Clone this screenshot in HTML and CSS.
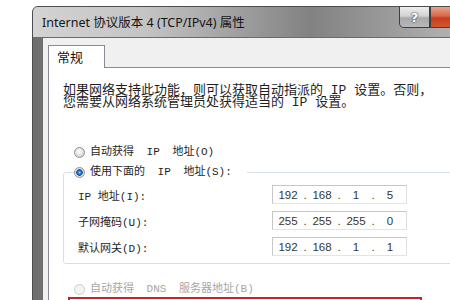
FILE: index.html
```html
<!DOCTYPE html>
<html>
<head>
    <meta charset="utf-8">
    <title>Internet 协议版本 4 (TCP/IPv4) 属性</title>
    <link rel="stylesheet" href="styles.css">
</head>
<body>
    <div class="window">
        <div class="titlebar">
            <span class="title">Internet 协议版本 4 (TCP/IPv4) 属性</span>
            <div class="caption-buttons">
                <button class="btn-help">?</button>
                <button class="btn-close"></button>
            </div>
        </div>
        <div class="frame">
            <div class="client">
                <div class="tabs">
                    <div class="tab">常规</div>
                </div>
                <div class="panel">
                    <p class="desc">如果网络支持此功能，则可以获取自动指派的 IP 设置。否则，<br>您需要从网络系统管理员处获得适当的 IP 设置。</p>

                    <label class="radio-row"><input type="radio" name="ip">自动获得 IP 地址(O)</label>

                    <fieldset class="group">
                        <legend><label class="radio-row"><input type="radio" name="ip" checked>使用下面的 IP 地址(S):</label></legend>
                        <div class="field-grid">
                            <span class="field-label">IP 地址(I):</span>
                            <div class="ip-box">
                                <span class="oct">192</span><span class="dot">.</span><span class="oct">168</span><span class="dot">.</span><span class="oct">1</span><span class="dot">.</span><span class="oct">5</span>
                            </div>
                            <span class="field-label">子网掩码(U):</span>
                            <div class="ip-box">
                                <span class="oct">255</span><span class="dot">.</span><span class="oct">255</span><span class="dot">.</span><span class="oct">255</span><span class="dot">.</span><span class="oct">0</span>
                            </div>
                            <span class="field-label">默认网关(D):</span>
                            <div class="ip-box">
                                <span class="oct">192</span><span class="dot">.</span><span class="oct">168</span><span class="dot">.</span><span class="oct">1</span><span class="dot">.</span><span class="oct">1</span>
                            </div>
                        </div>
                    </fieldset>

                    <label class="radio-row disabled"><input type="radio" name="dns" disabled>自动获得 DNS 服务器地址(B)</label>
                    <div class="highlight">
                        <label class="radio-row"><input type="radio" name="dns" checked>使用下面的 DNS 服务器地址(E):</label>
                    </div>
                </div>
            </div>
        </div>
    </div>
</body>
</html>
```

FILE: styles.css
```css
body {
    margin: 0;
    height: 300px;
    overflow: hidden;
    background-color: white;
    font-family: "Liberation Mono", "Noto Sans CJK SC", monospace;
    color: #1e1e1e;
}
.window {
    margin: 6px 0 0 32px;
    width: 447px;
    border: 1px solid #4e4e4e;
    border-radius: 6px 6px 0 0;
    background-color: #8d8d8d;
    overflow: hidden;
}
.titlebar {
    display: flex;
    height: 30px;
    background: linear-gradient(to right, #d3d3d3 0%, #c4c4c4 25%, #989898 50%, #828282 62%, #989898 78%, #afafaf 92%);
}
.title {
    align-self: center;
    padding-left: 9px;
    margin-top: -1px;
    font-family: "Noto Sans", "Noto Sans CJK SC", sans-serif;
    font-size: 12.5px;
    color: #151515;
}
.caption-buttons {
    display: flex;
    margin-left: auto;
    margin-right: 5px;
    margin-top: -1px;
    align-self: flex-start;
}
.caption-buttons button {
    height: 22px;
    margin: 0;
    padding: 0;
    border: 1px solid #3f3f3f;
    border-top-color: #6a6a6a;
    box-sizing: border-box;
}
.btn-help {
    width: 31px;
    border-radius: 0 0 0 5px;
    background: linear-gradient(to bottom, #eeeeee 0%, #d2d2d2 45%, #a9a9a9 55%, #b9b9b9 100%);
    font-family: "DejaVu Sans", sans-serif;
    font-size: 13px;
    font-weight: bold;
    color: white;
    text-shadow: 0 0 1px #333, 0 0 2px #444;
}
.btn-close {
    width: 45px;
    border-left: none;
    border-radius: 0 0 5px 0;
    background: linear-gradient(to bottom, #e9a48e 0%, #d9674a 45%, #c63c1e 55%, #d4552f 100%);
}
.frame {
    padding-left: 9px;
    background: linear-gradient(to right, #6e6e6e 0%, #9a9a9a 30%, #8a8a8a 70%, #6a6a6a 100%);
}
.client {
    padding: 7px 0 0 5px;
    background-color: #f0f0f0;
    border-top: 1px solid #6b6b6b;
    border-left: 1px solid #6b6b6b;
}
.tabs {
    display: flex;
}
.tab {
    position: relative;
    width: 57px;
    height: 23px;
    margin-bottom: -1px;
    padding-left: 8px;
    box-sizing: border-box;
    border: 1px solid #898c95;
    border-bottom: none;
    background-color: white;
    font-family: "Noto Sans CJK SC", sans-serif;
    font-size: 13px;
    line-height: 22px;
    color: #111;
}
.panel {
    height: 260px;
    padding-left: 14px;
    border: 1px solid #898c95;
    background-color: white;
}
.desc {
    margin: 0;
    padding-top: 17px;
    font-size: 13px;
    line-height: 12px;
    white-space: nowrap;
}
.radio-row {
    display: flex;
    align-items: center;
    gap: 5px;
    height: 14px;
    margin-left: 11px;
    font-size: 11px;
    line-height: 14px;
    word-spacing: 6px;
    white-space: nowrap;
}
.desc + .radio-row {
    margin-top: 36px;
}
input[type="radio"] {
    appearance: none;
    width: 11px;
    height: 11px;
    margin: 0;
    border: 1px solid #8f9090;
    border-radius: 50%;
    background: radial-gradient(circle at 45% 40%, #ffffff 0, #f0f0f0 2px, #d6d6d6 5px);
}
input[type="radio"]:checked {
    background: radial-gradient(circle, #9ad4ff 0, #2f7fdc 1.5px, #144c9e 3px, #d9d9d9 3.5px, #f4f4f4 5px);
}
input[type="radio"]:disabled {
    border-color: #cbcbcb;
    background: #f4f4f4;
}
.group {
    width: 420px;
    min-width: 0;
    margin: 6px 0 0 0;
    padding: 6px 0 7px 14px;
    border: 1px solid #d5dfe5;
    border-radius: 3px;
}
.group legend {
    margin-left: -4px;
    padding: 0 15px 0 0;
}
.group legend .radio-row {
    margin-left: 0;
}
.field-grid {
    display: grid;
    grid-template-columns: 194px 135px;
    row-gap: 7px;
    align-items: center;
}
.field-label {
    font-size: 11px;
    white-space: nowrap;
}
.ip-box {
    display: flex;
    align-items: center;
    height: 19px;
    padding-left: 3px;
    box-sizing: border-box;
    border: 1px solid #c6c6c6;
    border-right-color: #dfdfdf;
    border-bottom-color: #e4e4e4;
    background-color: white;
    font-family: "Liberation Sans", sans-serif;
    font-size: 11.5px;
    color: #363636;
}
.oct {
    width: 24px;
    text-align: center;
}
.dot {
    width: 10px;
    text-align: center;
}
.radio-row.disabled {
    margin-top: 18px;
    color: #a6a6a6;
}
.highlight {
    width: 354px;
    height: 24px;
    margin: 1px 0 0 5px;
    padding-top: 10px;
    box-sizing: border-box;
    border: 2px solid #c8232c;
}
.highlight .radio-row {
    margin-left: 4px;
}
```
